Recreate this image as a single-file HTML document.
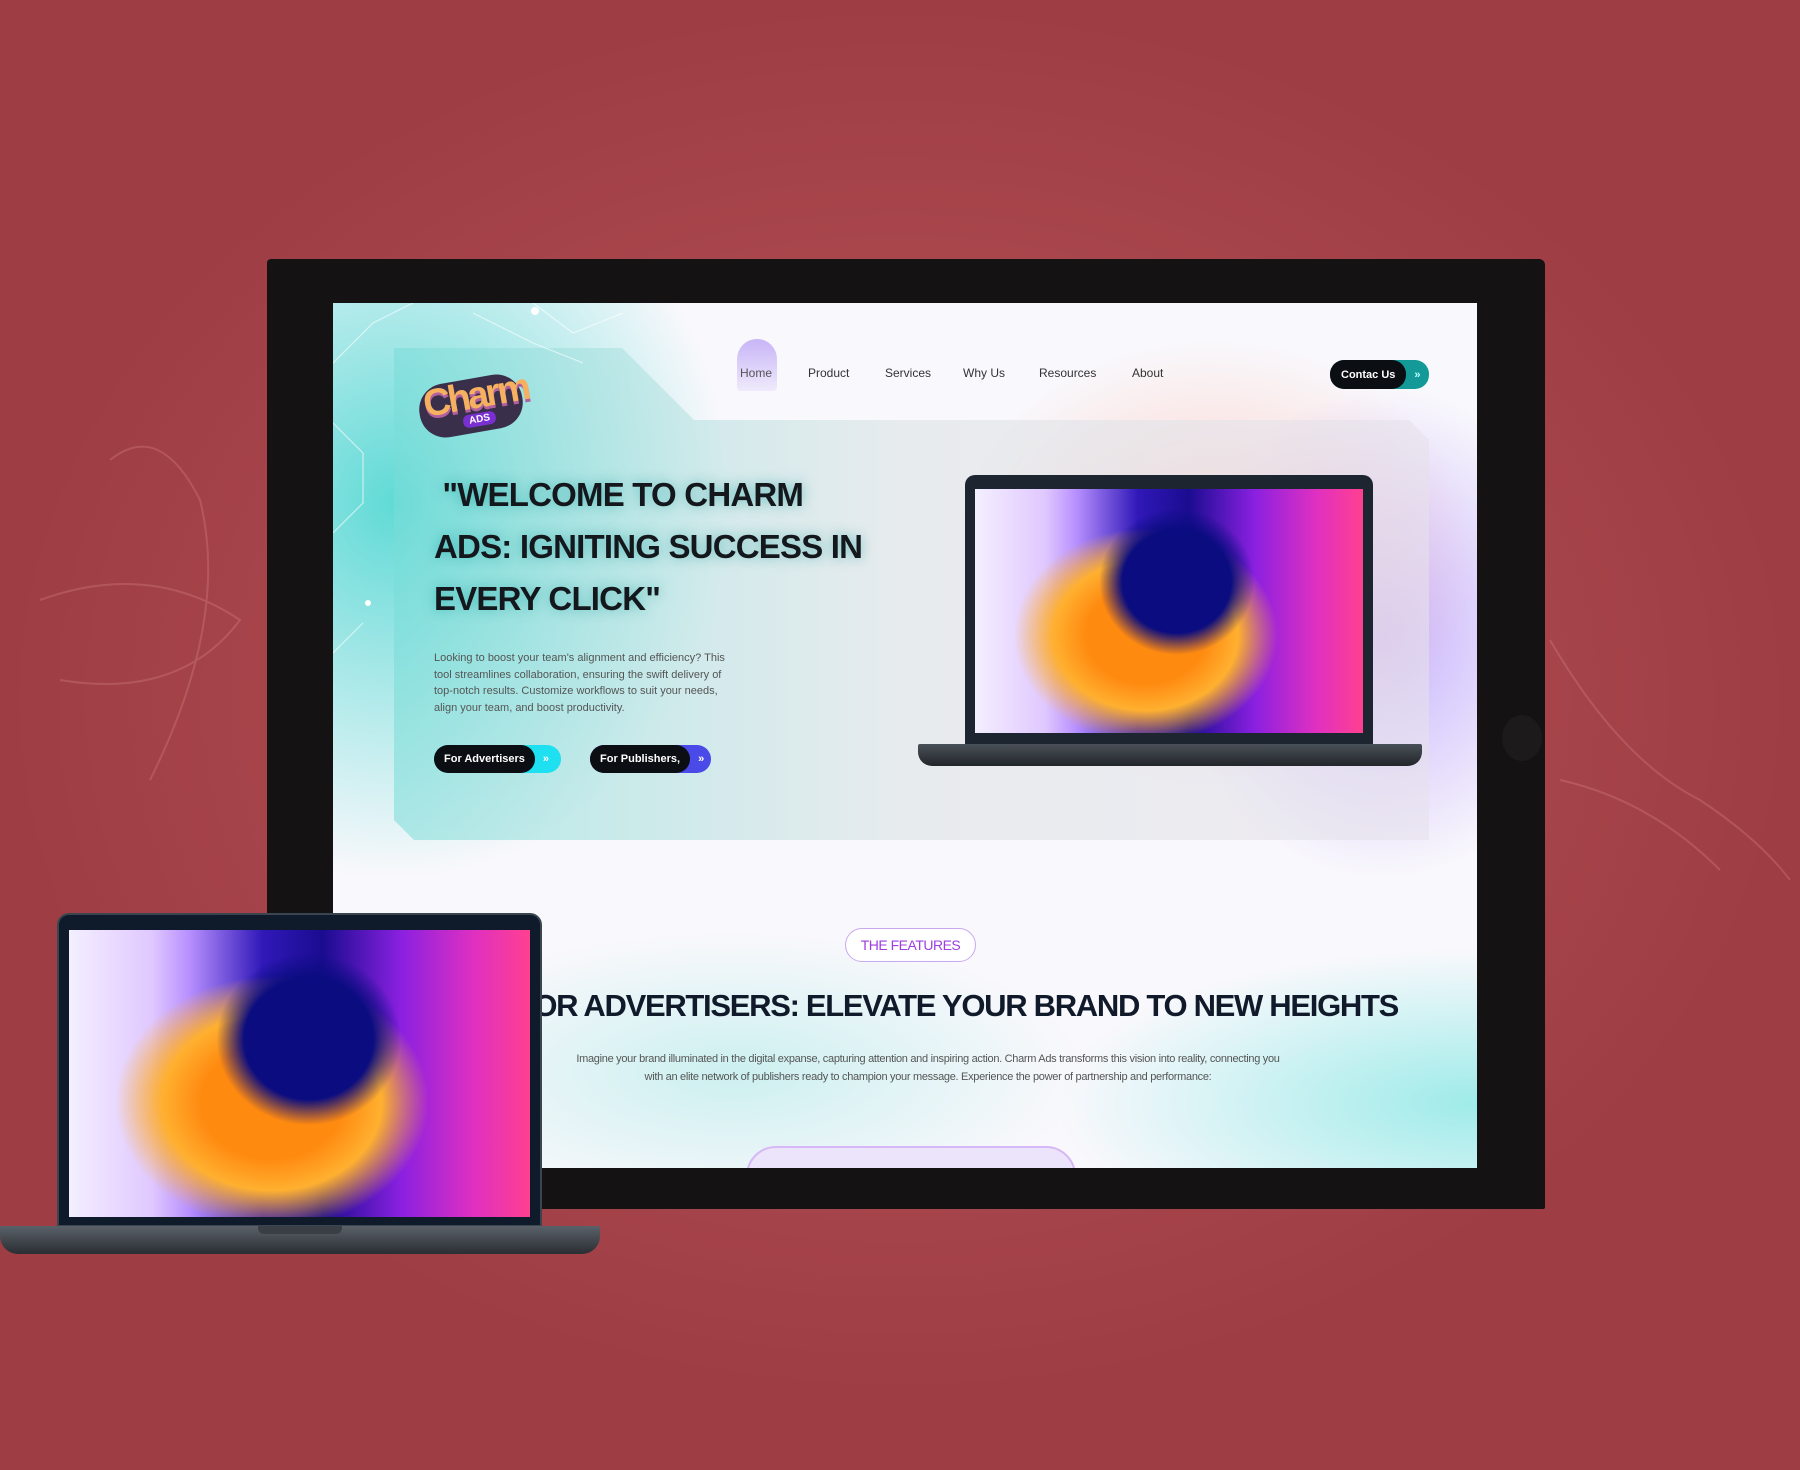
<!DOCTYPE html>
<html><head><meta charset="utf-8"><style>
*{margin:0;padding:0;box-sizing:border-box}
body{width:1800px;height:1470px;overflow:hidden;position:relative;font-family:"Liberation Sans",sans-serif;
background:radial-gradient(ellipse 900px 700px at 900px 700px,#b4545a 0%,#a9474d 60%,#9e3d44 100%);}
.abs{position:absolute}
.tablet{left:267px;top:259px;width:1278px;height:950px;background:#141212;border-radius:4px 6px 2px 2px}
.screen{left:333px;top:303px;width:1144px;height:865px;overflow:hidden;background:#f8f7fb}
.swirl{background:
radial-gradient(ellipse 20% 30% at 52% 38%,#0a0c80 0 70%,transparent 100%),
radial-gradient(ellipse 34% 44% at 44% 60%,#ff8a10 0 45%,#ffb030 70%,transparent 100%),
linear-gradient(90deg,#f4efff 0%,#e0c8ff 18%,#b890ff 26%,#3018b8 42%,#1a0c90 55%,#8a20e0 72%,#e030c0 88%,#ff4090 100%);}
.nav a{position:absolute;top:63px;font-size:12px;color:#333;text-decoration:none}
.pill{position:absolute;height:28px;border-radius:14px;font-size:11px;font-weight:bold;color:#fff;display:flex;align-items:center}
.pill span{background:#0b0f14;height:100%;border-radius:14px;display:flex;align-items:center;padding:0 10px;}
.h1{font-weight:bold;font-size:33px;color:#14181c;letter-spacing:-0.8px;text-shadow:0 0 12px rgba(0,150,150,.5)}
</style></head><body>
<svg class="abs" style="left:0;top:0" width="1800" height="1470">
<g fill="none" stroke="#e89a9a" stroke-width="2" opacity=".25">
<path d="M40 600 Q150 560 240 620 Q180 700 60 680"/><path d="M110 460 Q160 420 200 500 Q230 620 150 780"/>
<path d="M1550 640 Q1620 760 1700 800 Q1760 840 1790 880"/><path d="M1560 780 Q1650 800 1720 870"/>
</g></svg>
<div class="abs tablet"></div>
<div class="abs" style="left:1502px;top:715px;width:40px;height:46px;border-radius:50%;background:#1c1a1a"></div>
<div class="abs screen">
  <div class="abs" style="left:0;top:0;width:1144px;height:865px;background:
   radial-gradient(ellipse 380px 320px at 880px 260px,rgba(255,170,150,.55),transparent 70%),
   radial-gradient(ellipse 300px 350px at 1050px 330px,rgba(150,110,255,.5),transparent 70%),
   radial-gradient(ellipse 450px 500px at 60px 200px,rgba(80,215,210,.9),transparent 75%),
   radial-gradient(ellipse 600px 220px at 1144px 800px,rgba(120,230,225,.7),transparent 70%),
   radial-gradient(ellipse 500px 200px at 400px 770px,rgba(150,230,225,.45),transparent 70%),#f9f8fc"></div>
  <div class="abs" style="left:61px;top:45px;width:1035px;height:492px;background:linear-gradient(90deg,rgba(120,220,215,.55),rgba(225,230,232,.7) 50%,rgba(230,225,235,.6));clip-path:polygon(0 0,228px 0,300px 72px,1015px 72px,1035px 92px,1035px 492px,20px 492px,0 472px)"></div>
  <svg class="abs" style="left:0;top:0" width="300" height="400"><g stroke="#fff" stroke-width="1.2" fill="none" opacity=".6"><path d="M0 60 L40 20 L80 0 M200 0 L240 30 L290 10 M140 10 L200 40 L250 60 M0 120 L30 150 L30 200 L0 230 M30 320 L0 350"/></g><circle cx="202" cy="8" r="4" fill="#fff"/><circle cx="35" cy="300" r="3" fill="#fff"/></svg>
  <div class="abs" style="left:84px;top:62px;width:109px;height:73px;">
    <div class="abs" style="left:2px;top:14px;width:104px;height:54px;border-radius:26px;background:#3a2f4a;transform:rotate(-10deg)"></div>
    <div class="abs" style="left:6px;top:10px;font:bold 38px 'Liberation Sans',sans-serif;letter-spacing:-3px;color:#f5b060;transform:rotate(-10deg);text-shadow:0 3px 0 #b05fa0">Charm</div>
    <div class="abs" style="left:46px;top:48px;font:bold 10px sans-serif;color:#fff;background:#7a2fd0;padding:1px 6px;border-radius:6px;transform:rotate(-10deg)">ADS</div>
  </div>
  <div class="abs" style="left:404px;top:36px;width:40px;height:52px;border-radius:20px 20px 4px 4px;background:linear-gradient(#c7b4f7,rgba(200,180,250,.2))"></div>
  <div class="nav"><a style="left:407px;color:#555">Home</a><a style="left:475px">Product</a><a style="left:552px">Services</a><a style="left:630px">Why Us</a><a style="left:706px">Resources</a><a style="left:799px">About</a></div>
  <div class="pill" style="left:997px;top:57px;width:99px;background:#139a98;height:29px"><span style="padding:0 11px">Contac Us</span><b style="margin-left:8px;color:#bff">»</b></div>
  <div class="abs h1" style="left:101px;top:166px;line-height:52px">&nbsp;"WELCOME TO CHARM<br>ADS: IGNITING SUCCESS IN<br>EVERY CLICK"</div>
  <div class="abs" style="left:101px;top:347px;width:300px;font-size:11px;line-height:16.6px;color:#555">Looking to boost your team's alignment and efficiency? This tool streamlines collaboration, ensuring the swift delivery of top-notch results. Customize workflows to suit your needs, align your team, and boost productivity.</div>
  <div class="pill" style="left:101px;top:442px;width:127px;background:#1ee0f0"><span>For Advertisers</span><b style="margin-left:8px;color:#fff">»</b></div>
  <div class="pill" style="left:257px;top:442px;width:121px;background:#4a4ae8"><span>For Publishers,</span><b style="margin-left:8px">»</b></div>
  <div class="abs" style="left:632px;top:172px;width:408px;height:270px;background:#1d2630;border-radius:10px 10px 0 0;padding:14px 10px 12px"><div class="swirl" style="width:100%;height:100%"></div></div>
  <div class="abs" style="left:585px;top:441px;width:504px;height:22px;background:linear-gradient(#4a5058,#22262a);border-radius:2px 2px 14px 14px"></div>
  <div class="abs" style="left:512px;top:625px;width:131px;height:34px;border:1.5px solid #c9a8f0;border-radius:17px;background:#fff;color:#9d3ee0;font-size:14px;display:flex;align-items:center;justify-content:center;letter-spacing:-0.5px">THE FEATURES</div>
  <div class="abs" style="left:100px;top:685px;width:965px;text-align:right;font-weight:bold;font-size:31px;color:#111a2a;letter-spacing:-1.3px;white-space:nowrap">FOR ADVERTISERS: ELEVATE YOUR BRAND TO NEW HEIGHTS</div>
  <div class="abs" style="left:100px;top:747px;width:990px;text-align:center;font-size:11px;line-height:18px;color:#555;letter-spacing:-0.3px">Imagine your brand illuminated in the digital expanse, capturing attention and inspiring action. Charm Ads transforms this vision into reality, connecting you<br>with an elite network of publishers ready to champion your message. Experience the power of partnership and performance:</div>
  <div class="abs" style="left:413px;top:843px;width:330px;height:60px;border:2px solid #d5b8f5;border-radius:30px;background:#ece4fa"></div>
</div>
<div class="abs" style="left:57px;top:913px;width:485px;height:314px;background:#0f1a2a;border-radius:12px 12px 0 0;border:2px solid #3a4550;padding:15px 10px 8px 10px"><div class="swirl" style="width:100%;height:100%"></div></div>
<div class="abs" style="left:0;top:1226px;width:600px;height:28px;background:linear-gradient(#5a6168,#2a2e33);border-radius:2px 2px 18px 18px"></div>
<div class="abs" style="left:258px;top:1226px;width:84px;height:8px;background:#3a3f45;border-radius:0 0 6px 6px"></div>
</body></html>
